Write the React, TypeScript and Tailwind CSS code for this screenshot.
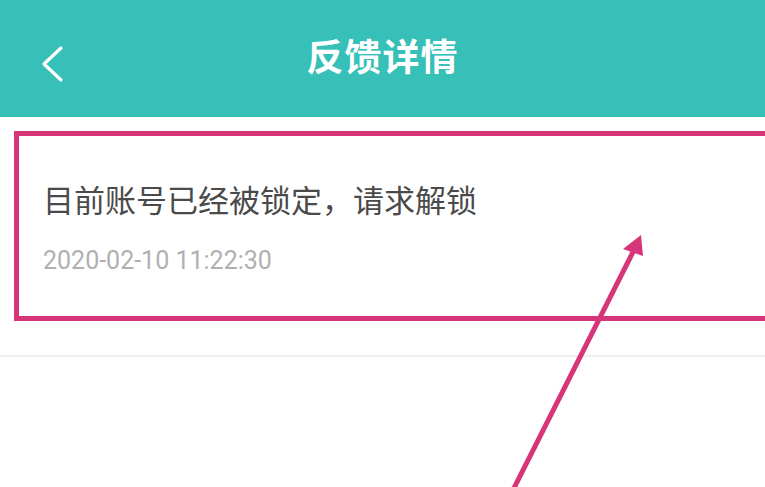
import React from "react";

export default function App() {
  return (
    <div className="relative w-[765px] h-[487px] overflow-hidden bg-white" style={{ fontFamily: 'Roboto, "Noto Sans CJK SC", sans-serif' }}>
      <header className="relative h-[117px] bg-[#36c0b8] flex items-center justify-center">
        <svg className="absolute left-[39px] top-[44px]" width="28" height="40" viewBox="0 0 28 40">
          <path d="M22 4 L5 20 L22 36" fill="none" stroke="#fff" strokeWidth="3.2" strokeLinecap="round" strokeLinejoin="round" />
        </svg>
        <h1 className="text-white text-[37px] font-bold leading-none tracking-[1px] mt-[-1px]">反馈详情</h1>
      </header>
      <div className="h-[240px] border-b-2 border-[#efefef] pl-[43px] pt-[69px]">
        <p className="text-[31px] leading-[31px] text-[#4a4a4a]">目前账号已经被锁定，请求解锁</p>
        <p className="mt-[31px] text-[25px] leading-[25px] text-[#b0b0b0] pl-[-1px]">2020-02-10 11:22:30</p>
      </div>
      <div className="absolute left-[14px] top-[131px] w-[756px] h-[190px] border-[5px] border-[#d6357a]" />
      <svg className="absolute left-0 top-0 pointer-events-none" width="765" height="487" viewBox="0 0 765 487">
        <line x1="512" y1="492" x2="634" y2="250" stroke="#d6357a" strokeWidth="5" />
        <polygon points="641,235 623,249 643,256" fill="#d6357a" />
      </svg>
    </div>
  );
}
